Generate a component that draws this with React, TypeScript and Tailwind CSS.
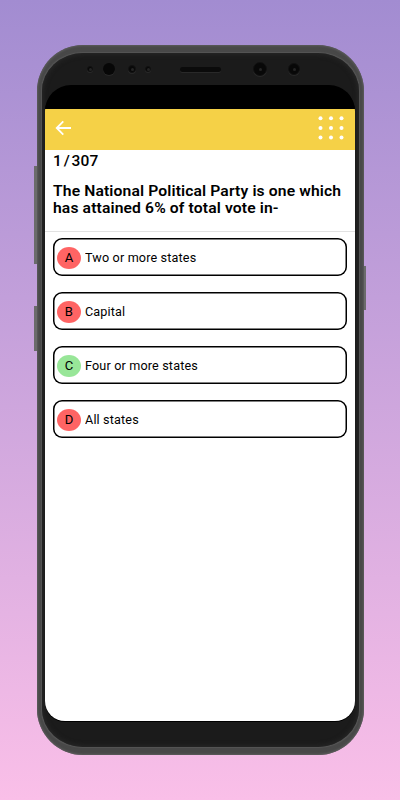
import React from "react";

const options = [
  { letter: "A", label: "Two or more states", correct: false },
  { letter: "B", label: "Capital", correct: false },
  { letter: "C", label: "Four or more states", correct: true },
  { letter: "D", label: "All states", correct: false },
];

function Lens({ className }: { className: string }) {
  return (
    <span className={`flex shrink-0 items-center justify-center rounded-full border border-[#111] bg-[#080808] shadow-[0_1px_0_#292929] ${className}`}>
      <span className="size-[3px] rounded-full bg-[#252525]" />
    </span>
  );
}

function Sensors() {
  return (
    <div className="flex h-[32px] w-full items-center pl-[42px]">
      <Lens className="size-[6px]" />
      <span className="ml-[10px] size-[12px] shrink-0 rounded-full bg-[#070707] shadow-[0_1px_0_#292929]" />
      <Lens className="ml-[13px] size-[8px]" />
      <Lens className="ml-[9px] size-[6px]" />
      <span className="ml-[29px] h-[5px] w-[41px] shrink-0 rounded-full bg-[#0b0b0b] shadow-[0_1px_0_#292929]" />
      <Lens className="ml-[32px] size-[14px]" />
      <Lens className="ml-[21px] size-[12px]" />
    </div>
  );
}

function Header() {
  return (
    <header className="flex h-[41px] shrink-0 items-center justify-between bg-[#f5d147] pl-[10px] pr-[11px]">
      <svg width="17" height="16" viewBox="0 0 17 16" fill="none" stroke="white" strokeWidth="1.8" className="-mt-[4px]">
        <path d="M16 8H1.8M8.3 1.4L1.7 8L8.3 14.6" />
      </svg>
      <svg width="26" height="24" viewBox="0 0 26 24" fill="white" className="-mt-[3px]">
        {[2.2, 11.9, 21.6].map((y) => [2.5, 13, 23.5].map((x) => <circle key={`${x}-${y}`} cx={x} cy={y} r="2" />))}
      </svg>
    </header>
  );
}

export default function App() {
  return (
    <main className="h-[800px] w-[400px] overflow-hidden bg-linear-to-b from-[#a28cd1] to-[#fabfe8] pl-[37px] pt-[45px] font-[Roboto,'Liberation_Sans',sans-serif] text-black">
      <div className="relative h-[710px] w-[327px]">
        <span className="absolute -left-[3px] top-[121px] h-[98px] w-[4px] bg-[#6b6b6b]" />
        <span className="absolute -left-[3px] top-[261px] h-[45px] w-[4px] bg-[#6b6b6b]" />
        <span className="absolute -right-[2px] top-[221px] h-[44px] w-[4px] bg-[#6b6b6b]" />
        <div className="relative h-full rounded-[46px] bg-[#484848] px-[5px] py-[8px] shadow-[inset_0_0_2px_1px_#5c5c5c]">
          <div className="flex h-full flex-col rounded-[41px/38px] bg-[#1b1b1b] px-[3px] pr-[4px] shadow-[inset_0_0_5px_1px_#292929,0_0_1px_0.5px_#555]">
            <Sensors />
            <div className="flex h-[636px] w-[310px] shrink-0 flex-col overflow-hidden rounded-t-[26px] rounded-b-[20px] bg-black shadow-[0_1px_0_black]">
              <div className="h-[24px] shrink-0" />
              <Header />
              <div className="grow bg-white">
                <section className="h-[82px] border-b border-[#e2e2e2] pl-[8px] pt-[3px]">
                  <div className="flex w-max origin-left scale-x-[1.07] text-[14.5px] font-medium leading-[18px] tracking-[0.2px]">
                    <span>1</span>
                    <span className="ml-[1.5px]">/</span>
                    <span className="ml-[1.5px]">307</span>
                  </div>
                  <h1 className="mt-[11px] w-max origin-left translate-y-[0.6px] scale-x-[1.08] whitespace-pre text-[14.5px] font-semibold leading-[17px] tracking-[0.12px]">
                    {"The National Political Party is one which\nhas attained 6% of total vote in-"}
                  </h1>
                </section>
                <ul className="flex flex-col gap-[16px] px-[8px] pt-[6px]">
                  {options.map((o) => (
                    <li key={o.letter} className="flex h-[38px] items-center rounded-[9px] pl-[4px] pt-px shadow-[inset_0_0_0_1.5px_black]">
                      <span className={`flex h-[22px] w-[24px] items-center justify-center rounded-[50%] pt-px text-[12px] ${o.correct ? "bg-[#98e698]" : "bg-[#ff6464]"}`}>
                        <span className="scale-x-[1.09]">{o.letter}</span>
                      </span>
                      <span className="ml-[4px] origin-left scale-x-[1.05] pt-px text-[12px] tracking-[0.15px]">{o.label}</span>
                    </li>
                  ))}
                </ul>
              </div>
            </div>
          </div>
        </div>
      </div>
    </main>
  );
}
